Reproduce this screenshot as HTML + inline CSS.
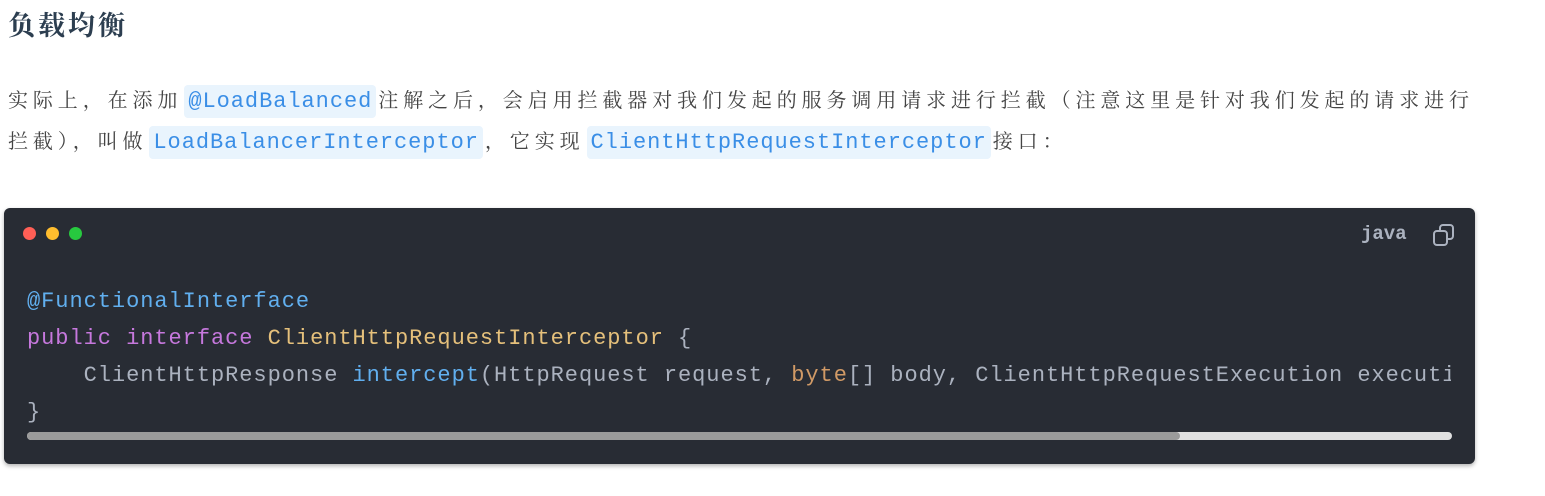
<!DOCTYPE html>
<html><head><meta charset="utf-8"><style>
body{margin:0;background:#fff;width:1545px;height:496px;overflow:hidden;position:relative;font-family:"Liberation Serif","Noto Serif CJK SC",serif;color:#3f4a54}
h3{position:absolute;left:8px;top:4px;margin:0;font-size:27px;letter-spacing:3px;font-weight:bold;color:#2c3e50;line-height:44px}
.p{position:absolute;left:8px;top:81px;width:1540px;white-space:nowrap;font-size:20px;line-height:41px;letter-spacing:4.9px;color:#444}
code{font-family:"Liberation Mono",monospace;font-size:22px;letter-spacing:0.95px;color:#3a8ee6;background:#e9f4fd;border-radius:4px;padding:4px 4px;margin:0 2px}
.blk{position:absolute;left:4px;top:208px;width:1471px;height:256px;background:#282c34;border-radius:6px;box-shadow:0 2px 4px rgba(0,0,0,.3)}
.dot{position:absolute;top:227px;width:13px;height:13px;border-radius:50%}
pre{position:absolute;left:27px;top:283px;margin:0;font-family:"Liberation Mono",monospace;font-size:22px;letter-spacing:0.95px;line-height:37px;color:#abb2bf;width:1424px;overflow:hidden;white-space:pre}
.a{color:#61afef}.k{color:#c678dd}.c{color:#e5c07b}.n{color:#d19a66}
</style></head><body>
<h3>负载均衡</h3>
<div class="p">实际上，在添加<code>@LoadBalanced</code>注解之后，会启用拦截器对我们发起的服务调用请求进行拦截（注意这里是针对我们发起的请求进行<br>拦截），叫做<code>LoadBalancerInterceptor</code>，它实现<code>ClientHttpRequestInterceptor</code>接口：</div>
<div class="blk"></div>
<div class="dot" style="left:23px;background:#ff5f56"></div>
<div class="dot" style="left:46px;background:#ffbd2e"></div>
<div class="dot" style="left:69px;background:#27c93f"></div>
<div style="position:absolute;left:1361px;top:223px;font-family:'Liberation Mono',monospace;font-size:19px;font-weight:bold;color:#abb2bf">java</div>
<svg style="position:absolute;left:1432px;top:223px" width="24" height="24" viewBox="0 0 24 24" fill="none" stroke="#abb2bf" stroke-width="2"><rect x="2" y="8" width="13" height="14" rx="3"/><path d="M8 8V5a3 3 0 0 1 3-3h7a3 3 0 0 1 3 3v8a3 3 0 0 1-3 3h-3"/></svg>
<pre><span class="a">@FunctionalInterface</span>
<span class="k">public</span> <span class="k">interface</span> <span class="c">ClientHttpRequestInterceptor</span> {
    ClientHttpResponse <span class="a">intercept</span>(HttpRequest request, <span class="n">byte</span>[] body, ClientHttpRequestExecution execution) <span class="k">throws</span> IOException;
}</pre>
<div style="position:absolute;left:27px;top:432px;width:1425px;height:8px;background:#e0e0e0;border-radius:4px"></div>
<div style="position:absolute;left:27px;top:432px;width:1153px;height:8px;background:#9b9b9b;border-radius:4px"></div>
</body></html>
